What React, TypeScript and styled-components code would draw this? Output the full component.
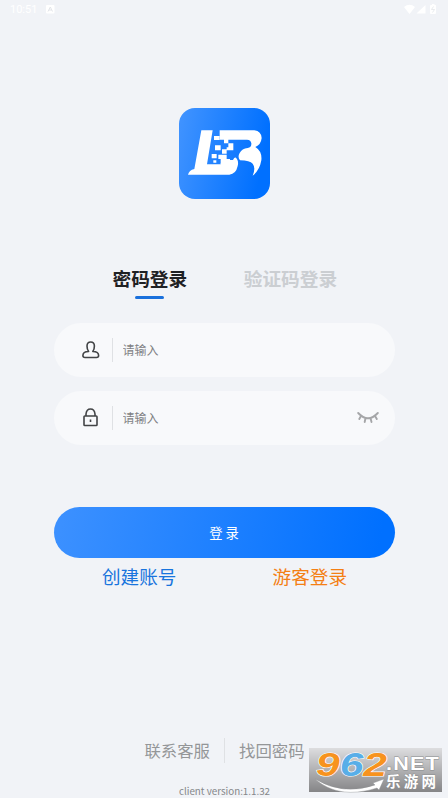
import React, { useState } from "react";
import styled, { createGlobalStyle } from "styled-components";

const GlobalStyle = createGlobalStyle`
  * {
    box-sizing: border-box;
  }
  body {
    margin: 0;
    background-color: #f1f3f7;
    font-family: "Noto Sans CJK SC", sans-serif;
  }
`;
const Screen = styled.div`
  position: relative;
  width: 448px;
  height: 798px;
  overflow: hidden;
  display: flex;
  flex-direction: column;
  align-items: center;
  background-color: #f1f3f7;
`;
const StatusBar = styled.div`
  width: 100%;
  height: 18px;
  padding: 0 10px;
  display: flex;
  align-items: center;
  justify-content: space-between;
  color: white;
  font-family: Roboto, sans-serif;
  font-size: 11px;
`;
const StatusGroup = styled.div`
  display: flex;
  align-items: center;
  gap: 9px;
`;
const Logo = styled.svg`
  flex: none;
  display: block;
  width: 91px;
  height: 91px;
  margin-top: 90px;
`;
const Tabs = styled.div`
  width: 100%;
  height: 36px;
  margin-top: 65px;
  padding-left: 112.5px;
  display: flex;
  gap: 56.5px;
`;
const Tab = styled.button<{ $active: boolean }>`
  height: 36px;
  padding: 0;
  border: none;
  background: none;
  display: flex;
  flex-direction: column;
  align-items: center;
  justify-content: flex-start;
  color: ${(props) => (props.$active ? "#1f2124" : "#cbced2")};
  font-family: inherit;
  font-size: 18.7px;
  font-weight: 700;
  line-height: 27px;
  white-space: nowrap;
  cursor: pointer;
  &::after {
    content: "";
    width: 29px;
    height: 3px;
    margin-top: 5px;
    border-radius: 2px;
    background-color: ${(props) => (props.$active ? "#1a70dc" : "transparent")};
  }
`;
const Form = styled.form`
  width: 341px;
  margin-top: 23px;
  display: flex;
  flex-direction: column;
`;
const Field = styled.label`
  height: 54px;
  margin-bottom: 14px;
  padding: 0 16px 0 27px;
  border-radius: 27px;
  background-color: #f8f9fb;
  display: flex;
  align-items: center;
  svg {
    flex: none;
  }
`;
const Divider = styled.span<{ $height: number }>`
  flex: none;
  width: 1px;
  height: ${(props) => props.$height}px;
  background-color: #dfe1e4;
`;
const Input = styled.input`
  flex: 1;
  min-width: 0;
  padding: 0 0 2px;
  margin-left: 10px;
  border: none;
  outline: none;
  background: none;
  font-family: inherit;
  font-size: 12px;
  color: #333;
  &::placeholder {
    color: #7f8183;
    opacity: 1;
  }
`;
const FieldIcon = styled.svg`
  width: 20px;
  height: 20px;
  margin-right: 11px;
  fill: none;
  stroke: #424446;
  stroke-width: 1.6;
  stroke-linejoin: round;
`;
const Submit = styled.button`
  height: 51px;
  margin-top: 48px;
  border: none;
  border-radius: 26px;
  background: linear-gradient(100deg, #3d91ff 0%, #0070ff 95%);
  color: white;
  font-family: inherit;
  font-size: 13.3px;
  cursor: pointer;
`;
const Links = styled.div`
  width: 341px;
  margin-top: 4px;
  padding: 0 47.5px 0 48.5px;
  display: flex;
  justify-content: space-between;
`;
const TextLink = styled.a<{ $color: string }>`
  color: ${(props) => props.$color};
  font-size: 18.6px;
  line-height: 28px;
`;
const Footer = styled.footer`
  width: 100%;
  margin-top: auto;
  padding-left: 1px;
  display: flex;
  flex-direction: column;
  align-items: center;
`;
const FooterLinks = styled.div`
  display: flex;
  align-items: center;
  gap: 14px;
  color: #949698;
  font-size: 16.4px;
  line-height: 26px;
`;
const Version = styled.div`
  height: 14px;
  margin-top: 21px;
  color: #85878a;
  font-size: 9.8px;
  line-height: 14px;
`;
const Watermark = styled.svg`
  position: absolute;
  left: 308px;
  top: 748px;
  width: 135px;
  height: 44px;
  overflow: visible;
`;

function AppLogo() {
  return (
    <Logo viewBox="30 30 273 273">
      <defs>
        <linearGradient id="logoBg" x1="0" y1="0" x2="1" y2="0.2">
          <stop offset="0" stopColor="#4294ff" />
          <stop offset="1" stopColor="#0070ff" />
        </linearGradient>
      </defs>
      <rect x="30" y="30" width="273" height="273" rx="48" fill="url(#logoBg)" />
      <g fill="white" transform="translate(45 78)">
        <path d="M52 19H86L69 121H110V117H138V108H147Q151 99 156 101Q165 110 161 126Q156 150 136 152H12Q15 139 31 135Z" />
        <path d="M107 19H211Q232 22 233 42Q231 62 214 69Q235 82 232 109Q227 139 206 155Q216 132 206 119Q198 110 168 109Q160 98 167 87Q174 74 191 72Q203 69 202 58Q201 48 189 47H133V58H120V47H107V34Z" />
        <path d="M90 36H107V48H90ZM133 58H148V79H128V70H133ZM93 64H110V79H93ZM114 76H128V89H114ZM83 90H98V103H83ZM103 92H128V105H138V119H110V105H103ZM88 109H97V116H88Z" />
      </g>
    </Logo>
  );
}

function SiteMark() {
  return (
    <Watermark viewBox="0 0 135 44">
      <defs>
        <linearGradient id="markBg" x1="0" y1="0" x2="0" y2="1">
          <stop offset="0" stopColor="#dddddf" />
          <stop offset="1" stopColor="#858587" />
        </linearGradient>
      </defs>
      <rect x="1" y="0" width="133" height="44" fill="url(#markBg)" />
      <path d="M7 31Q35 48 67 37L65 35L76 31L71 42L69 40Q31 52 7 31Z" fill="white" stroke="#909294" strokeWidth="0.4" />
      <text
        x="8"
        y="27.500"
        fontFamily="'Liberation Sans', sans-serif"
        fontWeight="700"
        fontStyle="italic"
        fontSize="33"
        textLength="71"
        lengthAdjust="spacingAndGlyphs"
        stroke="white"
        strokeWidth="1.2"
        paintOrder="stroke"
      >
        <tspan fill="#f7931e">9</tspan>
        <tspan fill="#58aee8">6</tspan>
        <tspan fill="#f7931e">2</tspan>
      </text>
      <g fill="white" stroke="#8a8c8e" strokeWidth="0.8" paintOrder="stroke" fontWeight="700">
        <text
          x="78"
          y="21.500"
          fontFamily="'Liberation Sans', sans-serif"
          fontSize="18"
          letterSpacing="1"
          textLength="54"
          lengthAdjust="spacingAndGlyphs"
        >
          .NET
        </text>
        <text x="78" y="38.500" fontFamily="'Noto Sans CJK SC', sans-serif" fontSize="14.500" textLength="50">乐游网</text>
      </g>
    </Watermark>
  );
}

function App() {
  const [tab, setTab] = useState("password");
  return (
    <Screen>
      <GlobalStyle />
      <StatusBar>
        <StatusGroup>
          <span>10:51</span>
          <svg width="9" height="9" viewBox="0 0 9 9">
            <rect width="8.5" height="8.5" rx="1" fill="white" />
            <path d="M2 6.5L4.3 2L6.5 6.5M3 5H5.7" fill="none" stroke="#e3e5e9" />
          </svg>
        </StatusGroup>
        <svg width="36" height="12" viewBox="0 0 36 12" fill="white">
          <path d="M2 4Q7.500 -0.500 13 4L7.500 11Z" />
          <path d="M14.500 10.500H23.500V2Z" />
          <path d="M29 2H30V1H32.500V2H33.500Q34 2 34 3V10Q34 11 33 11H29Q28 11 28 10V3Q28 2 29 2Z" />
          <path d="M31.500 3.500L29.500 6.500H32.500L30.500 9.500" fill="none" stroke="#e0e2e6" strokeWidth="0.7" />
        </svg>
      </StatusBar>
      <AppLogo />
      <Tabs>
        <Tab $active={tab === "password"} onClick={() => setTab("password")}>
          密码登录
        </Tab>
        <Tab $active={tab === "code"} onClick={() => setTab("code")}>
          验证码登录
        </Tab>
      </Tabs>
      <Form onSubmit={(e) => e.preventDefault()}>
        <Field>
          <FieldIcon viewBox="0 0 20 20">
            <path d="M7.600 11.500Q6 9.500 6 6Q6.100 2 9.700 2Q13.300 2 13.400 6Q13.400 9.500 11.800 11.500C16.500 11.500 17.600 13.500 17.600 15.500Q17.600 17.500 15.500 17.500H4Q1.900 17.500 1.900 15.500C1.900 13.500 3 11.500 7.600 11.500Z" />
          </FieldIcon>
          <Divider $height={24} />
          <Input type="text" placeholder="请输入" />
        </Field>
        <Field>
          <FieldIcon viewBox="0 0 20 20">
            <rect x="3" y="8" width="13" height="9.500" rx="0.8" />
            <path d="M5 8V6Q5.500 1 9.500 1Q13.500 1 14 6V8M9.500 11.500V14" />
          </FieldIcon>
          <Divider $height={24} />
          <Input type="password" placeholder="请输入" />
          <svg width="22" height="14" viewBox="0 0 22 14" fill="none" stroke="#a5a6a8" strokeWidth="1.9" strokeLinecap="round">
            <path d="M1.200 2Q11 12.500 20.800 2M4 5L2.300 8M8.500 7L7.700 11M13.500 7L14.500 11M18 5L19.800 8" />
          </svg>
        </Field>
        <Submit type="submit">登 录</Submit>
      </Form>
      <Links>
        <TextLink $color="#1874dd">创建账号</TextLink>
        <TextLink $color="#f47f14">游客登录</TextLink>
      </Links>
      <Footer>
        <FooterLinks>
          <span>联系客服</span>
          <Divider $height={25} />
          <span>找回密码</span>
        </FooterLinks>
        <Version>client version:1.1.32</Version>
      </Footer>
      <SiteMark />
    </Screen>
  );
}
export default App;
